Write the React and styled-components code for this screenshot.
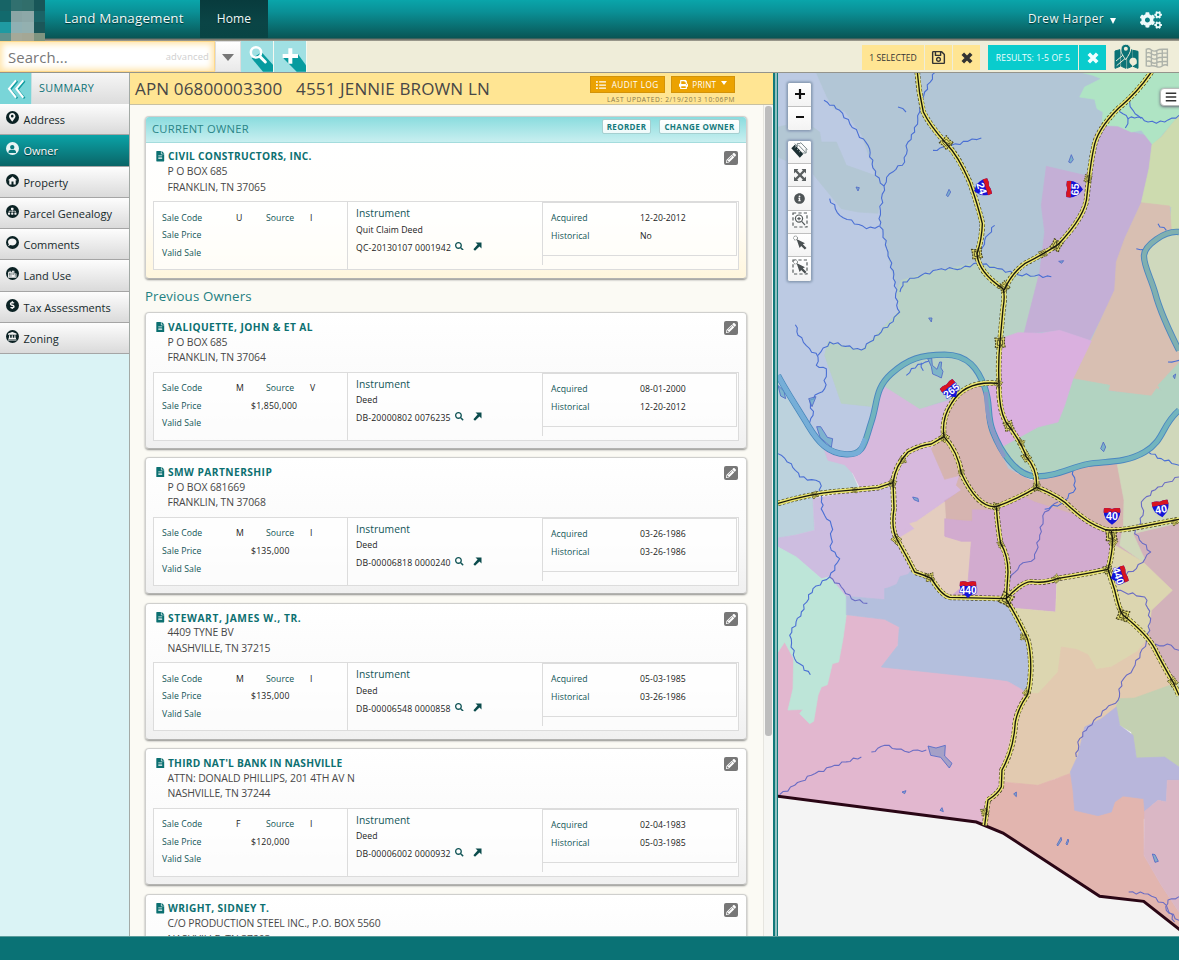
import React from "react";
import styled, { createGlobalStyle } from "styled-components";
import {
  FaSearch, FaCogs, FaListUl, FaPrint, FaPencilAlt, FaFileAlt,
  FaMapMarkerAlt, FaUser, FaSitemap, FaComment, FaCity, FaDollarSign,
  FaLandmark, FaInfoCircle, FaRegSave, FaBars,
} from "react-icons/fa";

const Global = createGlobalStyle`
  * { box-sizing: border-box; }
  body { margin: 0; overflow: hidden; font-family: "Open Sans", "Noto Sans", sans-serif; color: #222; }
  svg { display: block; flex: none; }
`;

const Page = styled.div`
  width: 1179px; height: 960px; display: flex; flex-direction: column; overflow: hidden; background: #fff;
`;

/* ---------- header ---------- */
const Header = styled.header`
  height: 41px; flex: none; display: flex; align-items: stretch; color: #eefafa;
  background: linear-gradient(#0aa5aa 0, #0a9096 12px, #095555 38px, #6b6b62 39px, #a6a598 41px);
`;
const Logo = styled.div`
  width: 45px; height: 41px; display: grid;
  grid-template-columns: 11px 11px 12px 11px; grid-template-rows: 11px 11px 11px 8px;
`;
const Tile = styled.span`background: ${(p) => p.$c};`;
const Brand = styled.div`
  width: 155px; padding: 8px 0 0 19px; font-size: 13.4px; line-height: 20px; letter-spacing: 0.17px; white-space: nowrap;
  text-shadow: 0 1px 1px #033;
`;
const HomeTab = styled.div`
  width: 68px; height: 38px; padding-top: 9px; text-align: center; font-size: 12px; line-height: 20px; letter-spacing: 0.1px;
  background: linear-gradient(#083b3d, #0a4546 60%, #094444); text-shadow: 0 1px 1px #022;
`;
const UserName = styled.div`
  margin-left: auto; padding-top: 8px; font-size: 11.8px; line-height: 20px; letter-spacing: 0.45px; text-shadow: 0 1px 1px #033;
  display: flex; gap: 6px; white-space: nowrap;
`;
const Caret = styled.span`
  align-self: center; width: 0; height: 0; margin-top: ${(p) => p.$mt || 0}px;
  border-left: ${(p) => p.$s || 3.5}px solid transparent; border-right: ${(p) => p.$s || 3.5}px solid transparent;
  border-top: ${(p) => p.$h || 6}px solid ${(p) => p.$c || "#fff"};
`;
const Gears = styled.div`margin: 9px 17px 0 24px; height: 21px;`;

/* ---------- search bar ---------- */
const Toolbar = styled.div`
  height: 32px; flex: none; display: flex; background: #efedd9; border-bottom: 1px solid #94948c;
`;
const SearchBox = styled.div`
  width: 215px; height: 31px; display: flex; justify-content: space-between; align-items: center;
  padding: 0 5px 0 8px; background: #fff; border: 1px solid #ffd98a; border-left-width: 0;
  box-shadow: inset 0 0 6px 2px #ffe3a6; font-size: 14.9px; letter-spacing: 0.1px; color: #777;
`;
const Advanced = styled.span`font-size: 9.4px; letter-spacing: 0.15px; color: #cfcfcf;`;
const DropBtn = styled.div`
  width: 26px; height: 31px; display: flex; justify-content: center; background: linear-gradient(#fff, #e9e9e9); border: 1px solid #ddd;
`;
const Square = styled.div`width: 33px; height: 31px; border-right: 1px solid #f6f8f0; background: #a0e0e3;`;
const Status = styled.div`margin-left: auto; display: flex; padding-top: 4px; height: 30px;`;
const Chip = styled.div`
  height: 25px; width: ${(p) => p.$w}px; margin-right: ${(p) => p.$gap ?? 1}px; display: flex; align-items: center; justify-content: center;
  background: ${(p) => (p.$teal ? "#09cccd" : "#ffe593")}; color: ${(p) => (p.$teal ? "#f0ffff" : "#333")};
  font-size: 8.6px; letter-spacing: ${(p) => (p.$teal ? 0.1 : 0.05)}px; white-space: nowrap;
`;
const MapIcons = styled.div`display: flex; gap: 6px; margin: -2px 10px 0 8px; align-items: flex-start;`;

/* ---------- body ---------- */
const Body = styled.div`height: 863px; flex: none; display: flex;`;
const Sidebar = styled.nav`width: 130px; flex: none; background: #daf3f5; border-right: 1px solid #a3aaa6;`;
const SummaryRow = styled.div`
  height: 31px; display: flex; background: linear-gradient(#f6f6f6, #dcdcdc); color: #0d7377; font-size: 10.8px; line-height: 30px;
  letter-spacing: 0.35px;
`;
const Collapse = styled.div`width: 32px; height: 31px; margin-right: 7px; background: #79d5d8; border-right: 1px solid #c9dfe0;`;
const NavRow = styled.div`
  height: 31.25px; display: flex; padding-left: 6px; gap: 4.5px; font-size: 11px; letter-spacing: 0; white-space: nowrap;
  line-height: 31px; border-bottom: 1px solid #a5a5a5;
  color: ${(p) => (p.$on ? "#fff" : "#16292b")};
  background: ${(p) => (p.$on ? "linear-gradient(#0ba3a7, #0a6567)" : "linear-gradient(#fdfdfd, #dadada)")};
  text-shadow: ${(p) => (p.$on ? "0 1px 1px #033" : "none")};
`;
const NavDot = styled.span`
  width: 13px; height: 13px; margin-top: 7px; border-radius: 50%; display: grid; place-items: center;
  background: ${(p) => (p.$on ? "#e9f4f4" : "#0b2224")}; color: ${(p) => (p.$on ? "#0a7a7d" : "#f4f4f4")};
`;
const Panel = styled.main`
  width: 643px; flex: none; display: flex; flex-direction: column; background: #fbfaf4; overflow: hidden;
`;
const TitleBar = styled.div`
  height: 32px; flex: none; display: flex; justify-content: space-between; background: #ffe593; border-bottom: 1px solid #c8c1a2;
  padding: 0 38px 0 5px; color: #474747;
`;
const Title = styled.h1`
  margin: 0; font-size: 17px; font-weight: 400; line-height: 32px; letter-spacing: 0.15px; white-space: pre;
`;
const TitleActions = styled.div`padding-top: 3px; display: flex; flex-wrap: wrap; justify-content: flex-end; gap: 0 6px; width: 146px;`;
const GoldBtn = styled.div`
  height: 17px; width: ${(p) => p.$w}px; display: flex; align-items: center; justify-content: center; gap: ${(p) => p.$gap}px;
  background: #eba201; border: 1px solid #d39309; color: #fff; font-size: 8.2px; letter-spacing: ${(p) => p.$ls}px; white-space: nowrap;
`;
const Updated = styled.div`font-size: 6.6px; letter-spacing: 0.6px; line-height: 12px; color: #87794b; white-space: nowrap; margin: 1px 0 0 -10px; height: 10px;`;
const Scroller = styled.div`height: 831px; display: flex;`;
const List = styled.div`width: 634px; padding: 11px 17px 0 15px; border-right: 1px solid #e6e5df; overflow: hidden; height: 831px;`;
const Track = styled.div`width: 9px; padding: 0 1px; background: #f6f6f3;`;
const Thumb = styled.div`width: 7px; height: 630px; margin-top: 1px; border-radius: 3px; background: #bdbdbd;`;

const Card = styled.section`
  width: 602px; margin-bottom: 8.4px; border: 1px solid #cfcfcd; border-bottom-color: #b3b3b1; border-radius: 4px; overflow: hidden;
  box-shadow: 0 1px 2px #8f8f8c;
  height: ${(p) => (p.$current ? 163 : 137)}px;
  background: ${(p) => (p.$current ? "linear-gradient(#fff 26px, #fffefb 60%, #fff6dd)" : "linear-gradient(#fff, #fafafa 60%, #f0f0f0)")};
`;
const CardHead = styled.div`
  height: 25.5px; display: flex; align-items: center; gap: 8px; padding: 0 6px 2px; font-size: 11.2px; letter-spacing: 0.28px; color: #2a8587;
  background: linear-gradient(#8adcde, #c8eff0); border-bottom: 1px solid #a4dcdd;
`;
const MiniBtn = styled.span`
  height: 15px; width: ${(p) => p.$w}px; text-align: center; margin-top: -3px; line-height: 13px; font-size: 8px; font-weight: 700; letter-spacing: 0.35px;
  color: #167a7c; background: linear-gradient(#fff, #eefafa); border: 1px solid #a5cfd0; border-radius: 2px; white-space: nowrap;
`;
const Spacer = styled.span`flex: 1;`;
const CardTop = styled.div`height: 58.5px; display: flex; justify-content: space-between; padding: 6px 8px 0 9px;`;
const Name = styled.div`
  display: flex; align-items: center; gap: 3px; height: 15.6px; font-size: 10.2px; font-weight: 700; letter-spacing: ${(p) => p.$ls}px; color: #0c7071; white-space: nowrap;
`;
const FileMark = styled.span`width: 10px; display: flex;`;
const Addr = styled.div`padding-left: 12.5px; font-size: 10.4px; line-height: 15.4px; letter-spacing: -0.1px; color: #484848; white-space: nowrap;`;
const Edit = styled.span`width: 14px; height: 14px; margin-top: 2px; border-radius: 2px; background: #777; color: #fff; display: grid; place-items: center;`;
const Table = styled.div`
  width: 586px; height: 69px; margin-left: 7px; display: flex; border: 1px solid #dcdcdc; background: rgba(255,255,255,0.72);
  font-size: 8.7px; line-height: 18px; letter-spacing: 0.05px; white-space: nowrap;
`;
const Sale = styled.div`width: 194px; padding: 6.5px 0 0 8px; border-right: 1px solid #dcdcdc;`;
const SaleRow = styled.div`display: grid; grid-template-columns: 74px 30px 44px 1fr; height: 17.6px;`;
const Key = styled.span`color: #125557;`;
const Price = styled.span`margin-left: 15px; letter-spacing: 0.2px;`;
const Instrument = styled.div`width: 194px; padding-left: 8px;`;
const InsTitle = styled.div`font-size: 10.3px; line-height: 23px; height: 18.5px; letter-spacing: 0.05px; color: #125557;`;
const DocLine = styled.div`display: flex; height: 18px; line-height: 18px; color: #125557;`;
const DocNo = styled.span`width: 99px; color: #222; letter-spacing: 0.17px;`;
const DocIcon = styled.span`width: 18px; padding-top: 3px;`;
const Dates = styled.div`width: 195px; height: 63px; border-left: 1px solid #dcdcdc;`;
const DatesBox = styled.div`height: 54px; padding: 6px 0 0 8px; border: 1px solid #dcdcdc; border-left: 0;`;
const DateRow = styled.div`display: grid; grid-template-columns: 89px 1fr; height: 18px;`;
const H2 = styled.h2`margin: 0; height: 33px; margin-top: -8.4px; padding-top: 3px; font-weight: 400; font-size: 13.3px; line-height: 29px; color: #238082; letter-spacing: 0.12px;`;

const Splitter = styled.div`width: 5px; flex: none; background: #8fc0c0; border-left: 2px solid #12797a; border-right: 1px solid #12797a;`;
const MapPane = styled.div`width: 401px; height: 863px; position: relative; overflow: hidden; background: #f4f4f4;`;
const Tools = styled.div`
  position: absolute; left: 9px; top: ${(p) => p.$top}px; width: 25px; border: 1px solid #8fa1b8; border-radius: 3px; background: #fff; overflow: hidden;
  box-shadow: 0 0 2px 1px #94a6bf;
`;
const Tool = styled.div`
  height: ${(p) => p.$h || 23.4}px; padding-bottom: ${(p) => p.$up || 0}px; display: grid; place-items: center; color: #4f5557; border-bottom: 1px solid #bfbfbf;
  background: linear-gradient(#fff, #f3f3f3);
  &:last-child { border-bottom: 0; }
`;
const MenuBtn = styled.div`
  position: absolute; left: 382px; top: 15px; width: 24px; height: 18px; padding: 2px 0 0 4px; border-radius: 4px; background: #fff; color: #333;
  border: 1px solid #b9bdbb; box-shadow: 0 1px 3px #667;
`;
const Footer = styled.footer`height: 24px; background: #0a7275; border-top: 1px solid #5b9c9c; flex: none;`;

/* ---------- drawings ---------- */
const LongSearch = () => (
  <svg width="32" height="31" viewBox="0 0 96 93">
    <path d="M32 52L66 92H97V72L62 34Z" fill="#079b9f" />
    <circle cx="45" cy="34" r="15.5" fill="none" stroke="#fff" strokeWidth="7.5" />
    <path d="M57 47L73 63" stroke="#fff" strokeWidth="9" strokeLinecap="round" />
  </svg>
);
const LongPlus = () => (
  <svg width="32" height="31" viewBox="0 0 96 93">
    <path d="M28 52L68 92H96V73L72 40Z" fill="#079b9f" />
    <path d="M49 22V68M26 45H72" stroke="#fff" strokeWidth="12" />
  </svg>
);
const Cross = () => (
  <svg width="12" height="12" viewBox="0 0 12 12"><path d="M1.800 1.800L10.200 10.200M10.200 1.800L1.800 10.200" stroke="currentColor" strokeWidth="3.600" /></svg>
);
const Chevrons = () => (
  <svg width="31" height="30" viewBox="0 0 93 90" fill="none" strokeWidth="6">
    <path d="M52 24L31 50L52 76M74 24L53 50L74 76" stroke="#129da1" />
    <path d="M48 22L27 47L48 74M70 22L49 47L70 74" stroke="#fff" />
  </svg>
);
const MapLogo = ({ c, pin }) => (
  <svg width={pin ? 25 : 24} height="27" viewBox="0 0 75 81" fill="none" stroke={c} strokeWidth="5">
    {pin ? (
      <g strokeWidth="3">
        <path d="M3 24L18 20V70L3 76ZM22 20L36 26V76L22 70ZM40 26L54 20V70L40 76ZM57 22L72 25V76L57 70Z" fill={c} />
        <path d="M6 54L30 34M8 68L34 46" stroke="#efedd9" strokeWidth="3" />
        <path d="M47 60C44 50 50 44 58 44S70 50 68 62L56 70Z" fill="#efedd9" stroke="none" />
        <path d="M35 50C24 34 20 28 21 18A14.500 14.500 0 0 1 50 18C50 28 44 36 35 50Z" fill={c} stroke="#efedd9" strokeWidth="3" />
        <circle cx="35.500" cy="17" r="6" fill="#efedd9" stroke="none" />
      </g>
    ) : (
      <path d="M4 18Q12 14 20 20T36 22T54 18T70 18V68Q62 64 54 70T36 72T20 70T4 70ZM20 20V70M37 22V72M54 18V70M4 30Q12 26 20 32T36 34T54 30T70 30M4 43Q12 39 20 45T36 47T54 43T70 43M4 56Q12 52 20 58T36 60T54 56T70 56" strokeWidth="4.300" />
    )}
  </svg>
);
const UpArrow = () => (
  <svg width="9" height="9" viewBox="0 0 9 9"><path d="M2.500 .500H8.500V6.500L6.500 4.600L2 8.800L.400 7.200L4.600 2.600Z" fill="#0c4c4d" /></svg>
);
const HouseGlyph = () => (
  <svg width="9" height="9" viewBox="0 0 9 9"><path d="M4.500 .5L9 4.300H7.700V8.500H5.500V5.500H3.500V8.500H1.300V4.300H0Z" fill="currentColor" /></svg>
);
const Ruler = () => (
  <svg width="17" height="17" viewBox="0 0 54 54">
    <path d="M1 20L12 9L39 38L28 50Z" fill="#1b2f33" />
    <path d="M20 14L12 5M20 5H30M20 5V15M24 10L46 33M48 22V35H36M30 1L52 24" stroke="#5c6c70" strokeWidth="2.500" fill="none" />
    <path d="M12 18L16 14M19 25L23 21M26 32L30 28" stroke="#fff" strokeWidth="2" />
  </svg>
);
const FourWay = () => (
  <svg width="12" height="12" viewBox="0 0 12 12" fill="#5a5f60"><path d="M0 0H4.400L3.200 1.500L6 4.400L8.800 1.500L7.600 0H12V4.400L10.600 3.100L7.600 6L10.600 8.900L12 7.600V12H7.600L8.800 10.600L6 7.700L3.200 10.600L4.400 12H0V7.600L1.400 8.900L4.400 6L1.400 3.100L0 4.400Z" /></svg>
);
const Marquee = ({ zoom, box }) => (
  <svg width="16" height="16" viewBox="0 0 16 16" fill="none" stroke="#555b5c" strokeWidth="1.200">
    {box && <rect x="1" y="1" width="14" height="14" strokeDasharray="3.2 2.2" />}
    {zoom ? (
      <g><circle cx="7" cy="6.600" r="3.600" /><path d="M5.300 6.600H8.700M7 4.900V8.300M9.600 9.400L13 13" /></g>
    ) : (
      <g><circle cx="3.500" cy="3" r="2" fill="#fff" strokeDasharray="1 .7" strokeWidth=".9" /><path d="M4.500 4L13 8.200L10.800 9.200L14.500 13L12.800 14.600L9.200 11L7.600 13Z" fill="#4a5052" stroke="none" /></g>
    )}
  </svg>
);

/* ---------- map data ---------- */
const regions = [
  ["#b2c6d6", "0,0 1203,0 1203,1200 0,1200"],
  ["#d7b9dd", "300,1180 560,1180 600,1300 345,1500"],
  ["#b4bfdd", "300,1440 480,1440 480,1590 300,1590"],
  ["#d2abcf", "500,1260 1040,1200 1040,1500 500,1560"],
  ["#d2b2ba", "1000,1340 1203,1330 1203,1900 1080,1900"],
  ["#e2cab0", "740,1700 1110,1690 1203,1870 1203,1900 1000,1950 900,1990 740,1900"],
  ["#b4bfdd", "640,1780 752,1780 752,1880 640,1880"],
  ["#e2b5af", "860,2090 960,2090 980,2150 1110,2150 1130,2240 860,2240"],
  ["#bccae3", "0,0 112,0 145,75 165,110 200,120 250,190 290,310 315,345 303,440 330,560 355,660 365,714 330,760 250,834 150,809 140,850 165,920 190,994 280,1004 270,1080 235,1145 180,1150 140,1130 80,1040 0,910"],
  ["#b3c7d4", "0,165 80,148 125,180 130,210 175,210 205,280 290,310 315,340 300,424 240,420 190,410 100,300 0,255"],
  ["#b9d2c6", "355,660 370,625 460,600 580,575 640,578 700,605 785,615 772,654 738,786 690,790 668,810 670,934 610,940 560,960 500,985 425,1012 320,945 290,1004 190,994 165,920 140,850 150,809 250,834 365,714"],
  ["#c4afd6", "805,283 920,310 935,290 950,190 975,160 1020,162 1060,180 1122,195 1115,280 1090,390 1040,500 1020,560 1010,660 935,805 845,775 738,785 785,600 800,480 790,400"],
  ["#afe4c4", "905,0 945,10 970,20 920,45 905,75 950,82 957,110 975,120 972,160 1020,162 1060,180 1090,175 1125,220 1203,130 1203,0"],
  ["#cddbaf", "1122,218 1150,195 1203,130 1203,475 1175,480 1180,405 1090,392 1113,290"],
  ["#d8bfb2", "1090,392 1175,402 1180,475 1110,530 1110,600 1135,660 1203,840 1203,885 1165,910 1170,920 1140,950 1150,955 1135,972 1120,973 990,955 995,940 885,920 940,805 1010,654 1015,570 1040,500"],
  ["#cfd9bd", "1203,475 1160,480 1115,520 1098,550 1110,610 1130,660 1160,740 1203,840"],
  ["#b2d3c1", "885,920 995,940 990,957 1120,972 1135,950 1150,955 1140,940 1203,872 1203,1020 1100,1140 1000,1170 880,1185 770,1213 700,1190 670,1125 780,1065 840,1050"],
  ["#dab0df", "668,800 720,782 790,784 845,775 905,795 940,807 885,920 860,1000 840,1050 780,1065 670,1125 640,1030 625,940 668,935"],
  ["#bcd2dd", "0,910 80,1040 140,1140 150,1165 210,1180 225,1210 240,1245 105,1275 110,1375 50,1390 0,1400"],
  ["#d7b9dd", "320,945 290,990 275,1100 235,1145 140,1135 150,1165 200,1178 225,1205 245,1245 345,1232 345,1395 365,1384 415,1349 500,1284 550,1254 545,1210 500,1222 460,1130 498,1094 505,1024 530,980 425,1012"],
  ["#cdbde0", "105,1280 245,1255 345,1240 348,1380 400,1490 390,1505 365,1512 355,1535 320,1550 320,1585 230,1575 205,1580 150,1515 130,1520 60,1460 0,1425 0,1398 50,1390 110,1375"],
  ["#d6b4b0", "530,975 570,945 612,937 640,1080 690,1190 760,1225 880,1190 960,1175 1018,1172 1038,1284 1036,1360 1000,1376 935,1348 770,1290 655,1310 583,1345 500,1345 500,1290 550,1254 535,1240 545,1210 500,1222 460,1130 498,1094 505,1020"],
  ["#e4cdbf", "500,1290 503,1345 500,1395 550,1408 580,1408 577,1460 570,1530 515,1576 460,1519 420,1506 360,1400 410,1370 395,1355 415,1349"],
  ["#d2abcf", "583,1313 650,1315 700,1292 730,1270 770,1290 880,1325 1000,1376 990,1494 835,1530 833,1620 700,1608 685,1582 515,1576 570,1530 580,1408 550,1408 500,1392 500,1340 583,1350"],
  ["#d0d8bb", "1018,1178 1110,1140 1203,1020 1203,1352 1065,1385 1090,1440 1100,1460 1095,1470 1025,1420 1036,1360 1038,1284"],
  ["#dcd6b0", "700,1608 833,1620 837,1530 990,1494 1003,1415 1095,1470 1183,1555 1120,1615 1110,1695 1075,1740 1000,1785 955,1792 930,1748 850,1725 840,1800 780,1865 755,1865 760,1740"],
  ["#e2b7cf", "0,1628 205,1628 320,1640 364,1660 368,1700 340,1760 640,1800 735,1855 750,1880 700,2000 672,2100 665,2160 625,2190 618,2262 595,2250 0,2172"],
  ["#bde5d8", "0,1425 55,1455 130,1520 155,1515 205,1575 205,1628 195,1700 182,1770 163,1775 148,1838 130,1845 120,1870 107,1948 95,1955 65,1925 75,1912 30,1914 45,1850 47,1760 20,1710 0,1740"],
  ["#b4bfdd", "400,1500 420,1512 460,1530 515,1576 640,1580 690,1590 745,1690 760,1780 735,1855 715,1830 640,1820 310,1785 360,1720 364,1665 320,1642 205,1628 205,1573 320,1583 320,1550 355,1545"],
  ["#e2cab0", "850,1725 895,1732 930,1748 955,1792 1000,1785 1075,1740 1110,1730 1200,1840 1070,1875 1025,1880 985,1920 920,1975 885,2105 830,2120 780,2143 680,2130 672,2100 710,1950 745,1862 780,1865 840,1800"],
  ["#c3d0b2", "1025,1880 1070,1878 1203,1830 1203,2085 1160,2058 1075,2060 1060,1980 1025,1960 1010,1914"],
  ["#e2b5af", "618,2262 630,2190 670,2150 672,2130 780,2140 875,2105 880,2155 890,2215 960,2225 1005,2215 1035,2172 1097,2178 1098,2350 1150,2440 1203,2520 1203,2572 1097,2490 965,2473 675,2283"],
  ["#b8b6db", "970,1940 1015,1905 1025,1960 1065,1990 1075,2058 1160,2055 1203,2085 1203,2125 1168,2125 1165,2190 1140,2185 1100,2218 1097,2180 1035,2172 1010,2190 1000,2220 960,2231 890,2215 885,2155 877,2100 900,2050 920,1965"],
  ["#dab7c5", "1100,2218 1140,2185 1165,2190 1168,2125 1203,2125 1203,2520 1150,2440 1098,2350"],
];
const rivers = [
  "M0 910C20 950 60 1010 90 1060S150 1145 205 1147S260 1110 280 1050S290 950 340 905S430 848 500 848S600 890 620 945S625 1030 645 1080S710 1210 770 1213S880 1185 930 1176S1040 1175 1100 1140S1150 1060 1203 1015",
  "M1203 480C1160 475 1100 520 1098 550S1120 620 1132 665S1165 760 1203 835",
];
const streams = [
  [138, 85, 185, 115, 240, 185, 270, 220, 292, 310, 318, 342, 303, 440, 330, 540, 352, 630, 356, 700, 365, 720, 335, 755, 250, 834, 155, 810, 120, 850],
  [155, 380, 185, 430, 265, 470, 303, 462],
  [472, 0, 440, 60, 425, 120, 410, 180, 390, 210, 380, 270, 335, 305, 318, 342],
  [600, 572, 550, 590, 490, 590, 430, 610, 375, 630, 366, 660],
  [600, 572, 660, 590, 720, 608, 820, 614],
  [465, 235, 520, 220, 570, 208, 610, 198], [650, 460, 620, 505, 600, 570], [360, 105, 384, 120],
  [1020, 110, 1050, 140, 1080, 135, 1110, 150, 1160, 150, 1203, 130], [1055, 90, 1065, 115, 1090, 140], [1050, 140, 1042, 168],
  [52, 758, 60, 790, 95, 830, 120, 855, 115, 880, 145, 890, 140, 950, 95, 985, 105, 1030, 92, 1060],
  [0, 1145, 40, 1175, 65, 1215, 125, 1230, 130, 1290, 135, 1320, 160, 1360, 160, 1435, 185, 1460, 155, 1515, 105, 1550, 70, 1620, 35, 1690, 50, 1760, 97, 1808],
  [155, 1515, 190, 1545, 220, 1580, 268, 1594],
  [840, 1290, 800, 1320, 785, 1390, 770, 1460, 725, 1480, 695, 1522],
  [885, 1195, 893, 1250, 850, 1295, 800, 1312],
  [1203, 1215, 1140, 1245, 1090, 1290, 1095, 1330, 1070, 1385, 1118, 1440, 1075, 1490, 1030, 1515],
  [1110, 1140, 1150, 1160, 1203, 1180],
  [1015, 1555, 1100, 1575, 1118, 1640, 1105, 1710, 1065, 1790, 1030, 1830, 1020, 1885, 985, 1910, 930, 1965, 905, 2000, 895, 2055],
  [1120, 1720, 1180, 1720, 1203, 1735],
  [5, 2168, 50, 2140, 100, 2110, 170, 2080, 250, 2055], [280, 2040, 320, 2020, 380, 2038, 445, 2034],
  [1052, 2460, 1110, 2466, 1165, 2500, 1190, 2550], [1203, 2474, 1170, 2484, 1165, 2515, 1203, 2545],
  [385, 910, 400, 890, 432, 876], [430, 872, 436, 896], [432, 876, 452, 868], [1140, 455, 1165, 475], [1075, 530, 1100, 532], [1170, 870, 1203, 865],
];
const ponds = [
  "M872 270l8-22 6 15-8 10z", "M505 370l8-18 5 8-8 14z", "M234 345l10 2-4 10z", "M842 568l15-2-6 8z", "M452 738l10 0-2 12z",
  "M449 860l12-2 2 22 14 12 8-22 6 0-2 18 6 10-5 20-12-6-14-6-4-22z", "M968 1130l8-20 7 15-6 14z", "M92 980l22-6-12 30z", "M116 1064l12 0 14 22 6 10 16 4-4 26-14-12-20-18z",
  "M404 1275l16 4 2 10-14-6z", "M450 2022l24 6 28-8-2 32 22 22-8 14-26-32-30-6z", "M372 2160l12-4-4 9z", "M486 2215l6-8 4 12z", "M707 2166l8-6 0 14z",
  "M837 2318l12-22 2 8-12 18z", "M864 2315l6-14 2 6-5 12z", "M1123 2346l8 2 10 20-10 3z", "M1185 912l8-6-3 14z", "M0 940l18 18 5 22-15-8z",
];
const roads = [
  "M418 0Q422 60 436 120Q455 160 505 215Q540 250 575 330Q600 400 613 455Q612 500 597 545Q600 600 675 650Q682 670 675 710L666 810Q660 870 663 934Q662 1010 683 1049Q730 1110 745 1155Q778 1190 776 1246",
  "M1120 0Q1080 60 1020 110Q955 175 947 230Q938 270 927 370Q925 430 840 518Q790 550 740 575Q700 605 678 655",
  "M660 934Q560 925 520 995Q490 1040 498 1094Q540 1140 550 1204Q600 1310 655 1304Q720 1280 776 1246",
  "M0 1294Q100 1265 170 1259T300 1247L345 1232Q352 1180 390 1140Q430 1118 460 1116L498 1094",
  "M345 1232L348 1310Q338 1370 358 1404Q390 1460 410 1500Q440 1510 460 1519Q490 1570 515 1576L685 1580Q730 1530 760 1529Q800 1535 840 1519Q900 1510 990 1492",
  "M655 1306Q660 1370 668 1414Q690 1450 690 1500L685 1582Q720 1640 748 1700Q760 1740 758 1800Q755 1860 745 1874Q720 1910 712 1950Q708 2030 672 2094L670 2144Q660 2165 630 2184L620 2260",
  "M776 1246Q850 1275 880 1309Q930 1355 980 1372Q1010 1380 1100 1362L1203 1342",
  "M1000 1376Q1010 1420 990 1492L1010 1554Q1025 1620 1035 1629Q1110 1690 1130 1730T1185 1830L1203 1870",
];
const junctions = [
  [505, 212, 1], [597, 545, 1], [835, 520, 1], [795, 545, 0.7], [930, 320, 0.7], [678, 645, 0.9], [666, 812, 1], [660, 934, 0.7], [692, 1062, 0.9],
  [730, 1112, 0.6], [745, 1155, 0.8], [776, 1246, 0.7], [498, 1096, 0.8], [375, 1165, 0.6], [343, 1234, 0.7], [110, 1269, 0.6], [230, 1255, 0.5], [355, 1402, 0.8],
  [455, 1516, 0.8], [685, 1582, 1.2], [668, 1416, 0.6], [655, 1304, 0.7], [835, 1520, 0.7], [1000, 1390, 1.1], [1005, 1412, 0.7], [990, 1492, 0.8],
  [1035, 1630, 1.1], [1185, 1830, 0.8], [736, 1695, 0.6], [745, 1862, 0.6], [620, 2220, 0.7], [550, 1200, 0.5], [1190, 1350, 0.6],
];
const shields = [
  [612, 349, "24", 72], [890, 352, "65", -88], [519, 955, "265", -38], [570, 1553, "440", 0], [1002, 1333, "40", 0], [1149, 1311, "40", -10], [1022, 1511, "440", 72],
];
// Irregular bank line: every segment is subdivided and pushed sideways by a repeatable offset.
const wiggle = (pts) => {
  let d = `M${pts[0]} ${pts[1]}`;
  for (let i = 2; i < pts.length; i += 2) {
    const [x0, y0, x1, y1] = [pts[i - 2], pts[i - 1], pts[i], pts[i + 1]];
    const len = Math.hypot(x1 - x0, y1 - y0);
    const n = Math.max(1, Math.round(len / 12));
    for (let k = 1; k <= n; k++) {
      const t = k / n;
      const o = k === n ? 0 : Math.sin(x0 * 3.1 + k * 2.3 + y0) * 4;
      d += `L${(x0 + (x1 - x0) * t - ((y1 - y0) / len) * o).toFixed(1)} ${(y0 + (y1 - y0) * t + ((x1 - x0) / len) * o).toFixed(1)}`;
    }
  }
  return d;
};
const ShieldText = styled.text`font: 700 ${(p) => p.$s}px "Liberation Sans", sans-serif; text-anchor: middle; fill: #fff; paint-order: stroke; stroke: #1414d8; stroke-width: 3px;`;

const CountyMap = () => (
  <svg width="401" height="864" viewBox="0 0 1203 2592">
    <g transform="translate(0,-3)">
      {regions.map(([c, p], i) => <polygon key={i} points={p} fill={c} stroke={c} strokeWidth="2" />)}
      {streams.map((s, i) => <path key={i} d={wiggle(s)} fill="none" stroke={s[1] > 1200 ? "#6a6cc4" : "#4a6fd4"} strokeWidth="3.300" strokeLinejoin="round" />)}
      {ponds.map((p, i) => <path key={i} d={p} fill={i === 10 ? "#9098c4" : "#69a9c8"} fillOpacity=".75" stroke="#5068c8" strokeWidth="2.500" />)}
      {rivers.map((r, i) => (
        <g key={i} fill="none" strokeLinejoin="round">
          <path d={r} stroke="#4b87c0" strokeWidth="19" />
          <path d={r} stroke={i ? "#80b0b0" : "#72b4be"} strokeWidth="13.500" />
        </g>
      ))}
      <path d="M0 910C20 950 60 1010 90 1060S150 1145 205 1147S245 1125 262 1100" fill="none" stroke="#76aed8" strokeWidth="13.500" />
      <path d="M624 960Q625 1030 645 1080T680 1155" fill="none" stroke="#8a9ac6" strokeWidth="12" />
      <path d="M0 2172L595 2250L675 2283L965 2473L1097 2488L1203 2572V2600H0Z" fill="#f4f4f4" />
      <path d="M-5 2172L595 2250L675 2283L965 2473L1097 2488L1210 2577" fill="none" stroke="#2a0615" strokeWidth="9" />
      <g fill="none" strokeLinejoin="round">
        {roads.map((r, i) => <path key={i} d={r} stroke="#3c3a18" strokeWidth="16.500" strokeDasharray="8 5" />)}
        {roads.map((r, i) => <path key={i} d={r} stroke="#ebe570" strokeWidth="13" />)}
        {junctions.map(([x, y, s], i) => (
          <g key={i} transform={`translate(${x} ${y}) scale(${s}) rotate(${(i * 37) % 90})`}>
            <path d="M-21 0L-9 -9L0 -21L9 -9L21 0L9 9L0 21L-9 9Z" fill="#e0da6a" stroke="#4a4720" strokeWidth="3.500" strokeDasharray="6 3" />
            <path d="M-11 0L0 -11L11 0L0 11ZM-14 -5L14 5" stroke="#4a4720" strokeWidth="2.500" />
          </g>
        ))}
        {roads.map((r, i) => <path key={i} d={r} stroke="#16160c" strokeWidth="4" />)}
      </g>
      {shields.map(([x, y, t, a], i) => (
        <g key={i} transform={`translate(${x} ${y}) rotate(${a})`}>
          <path d="M-24 -24Q-12 -27 0 -22Q12 -27 24 -24Q30 4 0 25Q-30 4 -24 -24Z" fill="#1414d8" />
          <path d="M-24 -24Q-12 -27 0 -22Q12 -27 24 -24L25 -11H-25Z" fill="#d81420" />
          <ShieldText y="12" $s={t.length > 2 ? 31 : 32}>{t}</ShieldText>
        </g>
      ))}
    </g>
  </svg>
);

/* ---------- content ---------- */
const tiles = ["#176466", "#31706f", "#316e6b", "#185658", "#126a6d", "#8aa5a5", "#8da8a8", "#1b6366", "#1f9aa2", "#8fb0b3", "#93b0b0", "#1b5759", "#5f918d", "#a5a999", "#a4a795", "#7e9480"];
const nav = [
  ["Address", FaMapMarkerAlt], ["Owner", FaUser], ["Property", HouseGlyph], ["Parcel Genealogy", FaSitemap],
  ["Comments", FaComment], ["Land Use", FaCity], ["Tax Assessments", FaDollarSign], ["Zoning", FaLandmark],
];
const owners = [
  { name: "CIVIL CONSTRUCTORS, INC.", ls: 0.3, a: "P O BOX 685", b: "FRANKLIN, TN 37065", code: "U", src: "I", deed: "Quit Claim Deed", doc: "QC-20130107 0001942", acq: "12-20-2012", hist: "No" },
  { name: "VALIQUETTE, JOHN & ET AL", ls: 0.42, a: "P O BOX 685", b: "FRANKLIN, TN 37064", code: "M", src: "V", price: "$1,850,000", deed: "Deed", doc: "DB-20000802 0076235", acq: "08-01-2000", hist: "12-20-2012" },
  { name: "SMW PARTNERSHIP", ls: 0.44, a: "P O BOX 681669", b: "FRANKLIN, TN 37068", code: "M", src: "I", price: "$135,000", deed: "Deed", doc: "DB-00006818 0000240", acq: "03-26-1986", hist: "03-26-1986" },
  { name: "STEWART, JAMES W., TR.", ls: 0.6, a: "4409 TYNE BV", b: "NASHVILLE, TN 37215", code: "M", src: "I", price: "$135,000", deed: "Deed", doc: "DB-00006548 0000858", acq: "05-03-1985", hist: "03-26-1986" },
  { name: "THIRD NAT'L BANK IN NASHVILLE", ls: 0.22, a: "ATTN: DONALD PHILLIPS, 201 4TH AV N", b: "NASHVILLE, TN 37244", code: "F", src: "I", price: "$120,000", deed: "Deed", doc: "DB-00006002 0000932", acq: "02-04-1983", hist: "05-03-1985" },
  { name: "WRIGHT, SIDNEY T.", ls: 0.38, a: "C/O PRODUCTION STEEL INC., P.O. BOX 5560", b: "NASHVILLE, TN 37203" },
];

const SaleTable = ({ o }) => (
  <Table>
    <Sale>
      <SaleRow><Key>Sale Code</Key><span>{o.code}</span><Key>Source</Key><span>{o.src}</span></SaleRow>
      <SaleRow><Key>Sale Price</Key><Price>{o.price}</Price></SaleRow>
      <SaleRow><Key>Valid Sale</Key></SaleRow>
    </Sale>
    <Instrument>
      <InsTitle>Instrument</InsTitle>
      <div>{o.deed}</div>
      <DocLine><DocNo>{o.doc}</DocNo><DocIcon><FaSearch size={8.5} /></DocIcon><DocIcon><UpArrow /></DocIcon></DocLine>
    </Instrument>
    <Dates>
      <DatesBox>
        <DateRow><Key>Acquired</Key><span>{o.acq}</span></DateRow>
        <DateRow><Key>Historical</Key><span>{o.hist}</span></DateRow>
      </DatesBox>
    </Dates>
  </Table>
);

const OwnerCard = ({ o, current }) => (
  <Card $current={current}>
    {current && (
      <CardHead>CURRENT OWNER<Spacer /><MiniBtn $w={49}>REORDER</MiniBtn><MiniBtn $w={81}>CHANGE OWNER</MiniBtn></CardHead>
    )}
    <CardTop>
      <div>
        <Name $ls={o.ls}><FileMark><FaFileAlt size={10.5} /></FileMark>{o.name}</Name>
        <Addr>{o.a}</Addr>
        <Addr>{o.b}</Addr>
      </div>
      <Edit><FaPencilAlt size={10} /></Edit>
    </CardTop>
    {o.doc && <SaleTable o={o} />}
  </Card>
);

export default function App() {
  return (
    <Page>
      <Global />
      <Header>
        <Logo>{tiles.map((c, i) => <Tile key={i} $c={c} />)}</Logo>
        <Brand>Land Management</Brand>
        <HomeTab>Home</HomeTab>
        <UserName>Drew Harper <Caret $mt={-8} /></UserName>
        <Gears><FaCogs size={22} /></Gears>
      </Header>
      <Toolbar>
        <SearchBox>Search...<Advanced>advanced</Advanced></SearchBox>
        <DropBtn><Caret $s={6} $h={7} $mt={2} $c="#777" /></DropBtn>
        <Square><LongSearch /></Square>
        <Square><LongPlus /></Square>
        <Status>
          <Chip $w={62}>1 SELECTED</Chip>
          <Chip $w={27}><FaRegSave size={15} /></Chip>
          <Chip $w={27} $gap={8}><Cross /></Chip>
          <Chip $w={90} $teal>RESULTS: 1-5 OF 5</Chip>
          <Chip $w={27} $gap={0} $teal><Cross /></Chip>
          <MapIcons><MapLogo c="#0b7376" pin /><MapLogo c="#adb2aa" /></MapIcons>
        </Status>
      </Toolbar>
      <Body>
        <Sidebar>
          <SummaryRow><Collapse><Chevrons /></Collapse>SUMMARY</SummaryRow>
          {nav.map(([t, Icon]) => (
            <NavRow key={t} $on={t === "Owner"}><NavDot $on={t === "Owner"}><Icon size={8.5} /></NavDot>{t}</NavRow>
          ))}
        </Sidebar>
        <Panel>
          <TitleBar>
            <Title>{"APN 06800003300   4551 JENNIE BROWN LN"}</Title>
            <TitleActions>
              <GoldBtn $w={74.5} $ls={0.5} $gap={6}><FaListUl size={10} />AUDIT LOG</GoldBtn>
              <GoldBtn $w={64.5} $ls={0.2} $gap={4.5}><FaPrint size={9} />PRINT<Caret $s={3} $h={4} $mt={-3} /></GoldBtn>
              <Updated>LAST UPDATED: 2/19/2013 10:06PM</Updated>
            </TitleActions>
          </TitleBar>
          <Scroller>
            <List>
              <OwnerCard o={owners[0]} current />
              <H2>Previous Owners</H2>
              {owners.slice(1).map((o) => <OwnerCard key={o.name} o={o} />)}
            </List>
            <Track><Thumb /></Track>
          </Scroller>
        </Panel>
        <Splitter />
        <MapPane>
          <CountyMap />
          <Tools $top={9}>
            <Tool $h={23.5}><svg width="10" height="10" viewBox="0 0 10 10"><path d="M5 0V10M0 5H10" stroke="#111" strokeWidth="2.200" /></svg></Tool>
            <Tool $h={23} $up={2}><svg width="10" height="10" viewBox="0 0 10 10"><path d="M1 5H9" stroke="#111" strokeWidth="2.200" /></svg></Tool>
          </Tools>
          <Tools $top={66.5}>
            <Tool $up={3}><Ruler /></Tool>
            <Tool><FourWay /></Tool>
            <Tool><FaInfoCircle size={11} /></Tool>
            <Tool $up={4}><Marquee zoom box /></Tool>
            <Tool $up={4}><Marquee /></Tool>
            <Tool $up={4}><Marquee box /></Tool>
          </Tools>
          <MenuBtn><FaBars size={12} /></MenuBtn>
        </MapPane>
      </Body>
      <Footer />
    </Page>
  );
}
